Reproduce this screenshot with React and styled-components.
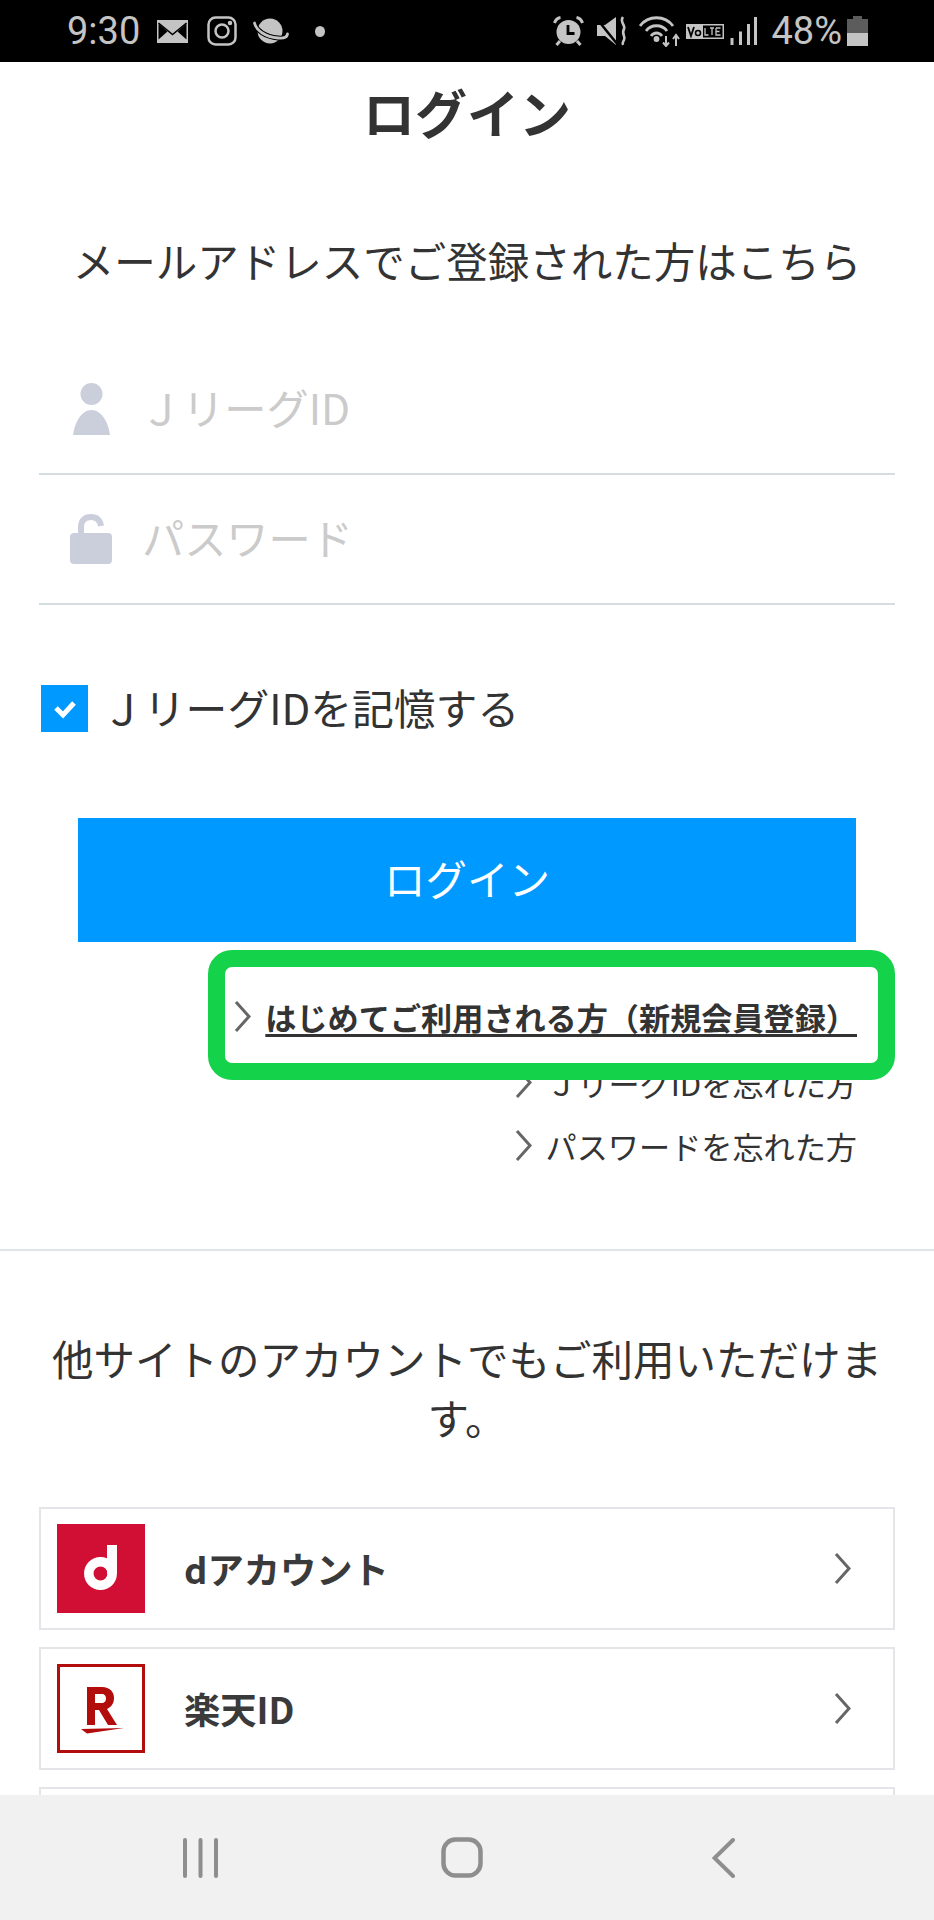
import React from "react"
import styled, { createGlobalStyle } from "styled-components"

const GlobalStyle = createGlobalStyle`
  html, body {
    margin: 0;
    padding: 0;
    background: #fff;
  }
  * {
    box-sizing: border-box;
  }
`

const Page = styled.div`
  position: relative;
  width: 934px;
  height: 1920px;
  overflow: hidden;
  background: #fff;
  color: #333;
  font-family: "Noto Sans CJK JP", "Noto Sans", sans-serif;
`

const StatusBar = styled.div`
  display: flex;
  align-items: center;
  justify-content: space-between;
  height: 62px;
  padding: 0 66px 0 67px;
  background: #000;
  color: #c4c4c4;
  font-family: Roboto, sans-serif;
  font-size: 38px;
  svg {
    display: block;
    flex: none;
  }
`

const StatusGroup = styled.div`
  display: flex;
  align-items: center;
`

const StatusItem = styled.span`
  display: block;
  margin-left: ${(p) => p.$gap}px;
  line-height: 44px;
`

const Title = styled.h1`
  display: flex;
  align-items: center;
  justify-content: center;
  height: 104px;
  margin: 0;
  padding-bottom: 6px;
  font-size: 52px;
  font-weight: 700;
`

const Lead = styled.p`
  margin: ${(p) => p.$top}px ${(p) => p.$side}px ${(p) => p.$bottom}px;
  font-size: 41.5px;
  line-height: ${(p) => p.$line}px;
  text-align: center;
  color: #333;
`

const Form = styled.div`
  margin: 0 39px;
`

const Field = styled.div`
  display: flex;
  align-items: center;
  height: 130px;
  padding-left: 29px;
  border-bottom: 2px solid #d5dde0;
`

const FieldIcon = styled.div`
  display: flex;
  justify-content: center;
  width: 46px;
  margin-right: ${(p) => p.$gap}px;
`

const Placeholder = styled.span`
  margin-bottom: 5px;
  font-size: 42.2px;
  color: #cbcbcb;
`

const Remember = styled.label`
  display: flex;
  align-items: center;
  gap: 14px;
  height: 47px;
  margin: 80px 0 86px 2px;
  font-size: 41.8px;
  color: #333;
`

const RememberText = styled.span`
  margin-bottom: 4px;
`

const CheckBox = styled.span`
  display: flex;
  align-items: center;
  justify-content: center;
  width: 47px;
  height: 47px;
  background: #0099ff;
`

const LoginButton = styled.button`
  display: block;
  width: 778px;
  height: 124px;
  margin: 0 0 0 39px;
  padding: 0 0 4px;
  border: 0;
  background: #0099ff;
  color: #fff;
  font-family: inherit;
  font-size: 41.500px;
`

const Links = styled.div`
  position: relative;
  display: flex;
  flex-direction: column;
  align-items: flex-end;
  padding: 40px 77px 0 0;
`

const LinkRow = styled.a`
  display: flex;
  align-items: center;
  gap: 14px;
  height: ${(p) => (p.$strong ? 69 : 63)}px;
  font-size: 31.150px;
  color: #333;
  font-weight: ${(p) => (p.$strong ? 700 : 400)};
  span {
    text-decoration: ${(p) => (p.$strong ? "underline" : "none")};
    text-underline-offset: 4px;
    text-decoration-thickness: 3px;
  }
`

const Highlight = styled.div`
  position: absolute;
  left: 208px;
  top: 8px;
  width: 687px;
  height: 130px;
  border: 17px solid #14d24a;
  border-radius: 24px;
`

const Divider = styled.hr`
  height: 2px;
  margin: 72px 0 0;
  border: 0;
  background: #e0e3e8;
`

const Providers = styled.div`
  display: flex;
  flex-direction: column;
  gap: 17px;
  margin: 0 39px;
`

const ProviderCard = styled.a`
  display: flex;
  align-items: center;
  height: 123px;
  padding: 0 42px 0 16px;
  border: 2px solid #e3e5e8;
  background: #fff;
  svg {
    display: block;
    flex: none;
  }
`

const ProviderName = styled.span`
  flex: 1;
  margin: 0 0 2px 39px;
  font-size: 36.300px;
  font-weight: 700;
  color: #3a3a3a;
`

const NavBar = styled.div`
  position: absolute;
  left: 0;
  right: 0;
  bottom: 0;
  display: flex;
  align-items: center;
  height: 125px;
  padding-left: 182px;
  background: #f1f1f1;
  svg {
    display: block;
  }
`

const NavItem = styled.span`
  display: block;
  margin-left: ${(p) => p.$gap}px;
`

const Chevron = () => (
  <svg width="17" height="33" viewBox="0 0 17 33" fill="none">
    <path d="M2 2 L15 16.5 L2 31" stroke="#666" strokeWidth="3" />
  </svg>
)

const MailIcon = () => (
  <svg width="31" height="23" viewBox="0 0 31 23">
    <rect width="31" height="23" fill="#c4c4c4" />
    <path d="M1.500 3.500 V19.500 L10.500 11.500 Z M29.500 3.500 V19.500 L20.500 11.500 Z" fill="#000" />
    <path d="M1.500 3 L15.500 14.500 L29.500 3" stroke="#000" strokeWidth="1.600" fill="none" />
  </svg>
)

const InstagramIcon = () => (
  <svg width="30" height="30" viewBox="0 0 30 30" fill="none" stroke="#c4c4c4" strokeWidth="2.500">
    <rect x="1.500" y="1.500" width="27" height="27" rx="7" />
    <circle cx="15" cy="15" r="6.500" />
    <circle cx="23" cy="7" r="1" fill="#c4c4c4" />
  </svg>
)

const PlanetIcon = () => (
  <svg width="36" height="26" viewBox="0 0 36 26" fill="none">
    <circle cx="17" cy="13" r="12.500" fill="#c4c4c4" />
    <path d="M1.500 5 C3 12 12 19 25 20 C30 20.500 34 19.500 34.500 16" stroke="#000" strokeWidth="5" />
    <path d="M1.500 5 C3 12 12 19 25 20 C30 20.500 34 19.500 34.500 16" stroke="#c4c4c4" strokeWidth="2.800" strokeLinecap="round" />
  </svg>
)

const Dot = styled.span`
  display: block;
  width: 10px;
  height: 11px;
  border-radius: 50%;
  background: #c4c4c4;
`

const AlarmIcon = () => (
  <svg width="31" height="30" viewBox="0 0 31 30" fill="none">
    <circle cx="15.500" cy="16" r="12" fill="#c4c4c4" />
    <path d="M15 9 V17.500 H21.500" stroke="#000" strokeWidth="2.800" />
    <path d="M1.500 7 C2.500 4 4.500 2 7.500 1.500 M29.500 7 C28.500 4 26.500 2 23.500 1.500" stroke="#c4c4c4" strokeWidth="3" />
    <path d="M7 25 L3.500 29 M24 25 L27.500 29" stroke="#c4c4c4" strokeWidth="3" />
  </svg>
)

const MuteIcon = () => (
  <svg width="30" height="30" viewBox="0 0 30 30" fill="none">
    <path d="M0 9 H8 L19 1 V29 L8 20 H0 Z" fill="#c4c4c4" />
    <path d="M0 3 L21 29" stroke="#000" strokeWidth="2.500" />
    <path d="M26 1 C22 6 29 9 27 13 C24 18 29 20 27 24 C26 26 25 27 26 29" stroke="#c4c4c4" strokeWidth="2.600" />
  </svg>
)

const WifiIcon = () => (
  <svg width="42" height="32" viewBox="0 0 42 32" fill="none" stroke="#c4c4c4" strokeWidth="2.800">
    <path d="M1 11 C9 0 26 0 34 11" />
    <path d="M7 16 C12 9 23 9 28 16" />
    <path d="M12 21 C15 17 20 17 23 21" />
    <circle cx="17.500" cy="24" r="1.500" fill="#c4c4c4" />
    <path d="M27 21 V31 M24 27.500 L27 31 L30 27.500 M37 31 V20 M34 24 L37 20 L40 24" strokeWidth="2" />
  </svg>
)

const VolteIcon = () => (
  <svg width="38" height="15" viewBox="0 0 38 15" fill="none">
    <rect width="38" height="15" fill="#c4c4c4" />
    <path d="M2 3 L5 12 L8 3" stroke="#000" strokeWidth="1.800" />
    <circle cx="12" cy="9" r="2.500" stroke="#000" strokeWidth="1.600" />
    <rect x="17" y="1.500" width="19.500" height="12" fill="#000" />
    <path d="M19 4 V11 H22.500 M24 4 H28 M26 4 V11 M30 4 H34.500 M30 4 V11 H34.500 M30 7.500 H33.500" stroke="#c4c4c4" strokeWidth="1.300" />
  </svg>
)

const SignalIcon = () => (
  <svg width="27" height="30" viewBox="0 0 27 30" stroke="#c4c4c4" strokeWidth="3">
    <path d="M2 22 V29 M10.500 15.500 V29 M18.500 8 V29 M25.500 1 V29" />
  </svg>
)

const BatteryIcon = () => (
  <svg width="21" height="30" viewBox="0 0 21 30">
    <rect x="6" y="0" width="9" height="3" fill="#5c5c5c" />
    <rect x="0" y="3" width="21" height="14" fill="#5c5c5c" />
    <rect x="0" y="17" width="21" height="13" fill="#c4c4c4" />
  </svg>
)

const PersonIcon = () => (
  <svg width="37" height="52" viewBox="0 0 37 52" fill="#cbcfdc">
    <circle cx="18.500" cy="11" r="11" />
    <path d="M0 52 C2 38 9 27 18.500 27 C28 27 35 38 37 52 Z" />
  </svg>
)

const LockIcon = () => (
  <svg width="42" height="50" viewBox="0 0 42 50" fill="none">
    <rect y="19" width="42" height="31" rx="4" fill="#cbcfdc" />
    <path d="M11 20 V13 C11 6 15 3 21 3 C27 3 30 6 31 12" stroke="#cbcfdc" strokeWidth="6" />
  </svg>
)

const DocomoLogo = () => (
  <svg width="88" height="89" viewBox="0 0 88 89">
    <rect width="88" height="89" fill="#d10f35" />
    <circle cx="43.500" cy="49.500" r="11.700" fill="none" stroke="#fff" strokeWidth="9.500" />
    <rect x="50" y="21" width="10" height="29" fill="#fff" />
  </svg>
)

const RakutenLogo = () => (
  <svg width="88" height="89" viewBox="0 0 88 89">
    <rect x="1.500" y="1.500" width="85" height="86" fill="#fff" stroke="#b30c0c" strokeWidth="3" />
    <path
      fillRule="evenodd"
      d="M30 23 H45 C53 23 57 28 57 34 C57 40 54 43 50 45 L60 61 H51 L42 46 H38 V61 H30 Z M38 30 V39 H45 C48 39 49 36.500 49 34.500 C49 32.500 48 30 45 30 Z"
      fill="#b30c0c"
    />
    <path d="M24 65 L67 64 L30 69.500 Z" fill="#b30c0c" />
  </svg>
)

const providers = [
  { name: "dアカウント", logo: <DocomoLogo /> },
  { name: "楽天ID", logo: <RakutenLogo /> },
]

const App = () => (
  <>
    <GlobalStyle />
    <Page>
      <StatusBar>
        <StatusGroup>
          <span>9:30</span>
          <StatusItem $gap={17}><MailIcon /></StatusItem>
          <StatusItem $gap={19}><InstagramIcon /></StatusItem>
          <StatusItem $gap={16}><PlanetIcon /></StatusItem>
          <StatusItem $gap={26}><Dot /></StatusItem>
        </StatusGroup>
        <StatusGroup>
          <AlarmIcon />
          <StatusItem $gap={13}><MuteIcon /></StatusItem>
          <StatusItem $gap={12}><WifiIcon /></StatusItem>
          <StatusItem $gap={5}><VolteIcon /></StatusItem>
          <StatusItem $gap={6}><SignalIcon /></StatusItem>
          <StatusItem $gap={14}>48%</StatusItem>
          <StatusItem $gap={5}><BatteryIcon /></StatusItem>
        </StatusGroup>
      </StatusBar>

      <Title>ログイン</Title>
      <Lead $top={64} $bottom={55} $side={0} $line={60}>
        メールアドレスでご登録された方はこちら
      </Lead>

      <Form>
        <Field>
          <FieldIcon $gap={26}>
            <PersonIcon />
          </FieldIcon>
          <Placeholder>ＪリーグID</Placeholder>
        </Field>
        <Field>
          <FieldIcon $gap={28}>
            <LockIcon />
          </FieldIcon>
          <Placeholder>パスワード</Placeholder>
        </Field>
        <Remember>
          <CheckBox>
            <svg width="24" height="20" viewBox="0 0 24 20" fill="none">
              <path d="M3 9 L10 16 L21 4" stroke="#fff" strokeWidth="5" />
            </svg>
          </CheckBox>
          <RememberText>ＪリーグIDを記憶する</RememberText>
        </Remember>
        <LoginButton>ログイン</LoginButton>
      </Form>

      <Links>
        <LinkRow $strong>
          <Chevron />
          <span>はじめてご利用される方（新規会員登録）</span>
        </LinkRow>
        <LinkRow>
          <Chevron />
          <span>ＪリーグIDを忘れた方</span>
        </LinkRow>
        <LinkRow>
          <Chevron />
          <span>パスワードを忘れた方</span>
        </LinkRow>
        <Highlight />
      </Links>

      <Divider />

      <Lead $top={78} $bottom={60} $side={48} $line={59}>
        他サイトのアカウントでもご利用いただけます。
      </Lead>

      <Providers>
        {providers.map((item) => (
          <ProviderCard key={item.name}>
            {item.logo}
            <ProviderName>{item.name}</ProviderName>
            <Chevron />
          </ProviderCard>
        ))}
        <ProviderCard />
      </Providers>

      <NavBar>
        <svg width="37" height="40" viewBox="0 0 37 40" stroke="#8e8e8e" strokeWidth="4" strokeLinecap="round">
          <path d="M3 2 V38 M18.500 2 V38 M34 2 V38" />
        </svg>
        <NavItem $gap={222}>
          <svg width="42" height="41" viewBox="0 0 42 41" fill="none">
            <rect x="2.500" y="2.500" width="37" height="36" rx="12" stroke="#8e8e8e" strokeWidth="4.500" />
          </svg>
        </NavItem>
        <NavItem $gap={229}>
          <svg width="23" height="40" viewBox="0 0 23 40" fill="none" stroke="#8e8e8e" strokeWidth="4" strokeLinecap="round">
            <path d="M21 2 L2.500 20 L21 38" />
          </svg>
        </NavItem>
      </NavBar>
    </Page>
  </>
)

export default App
